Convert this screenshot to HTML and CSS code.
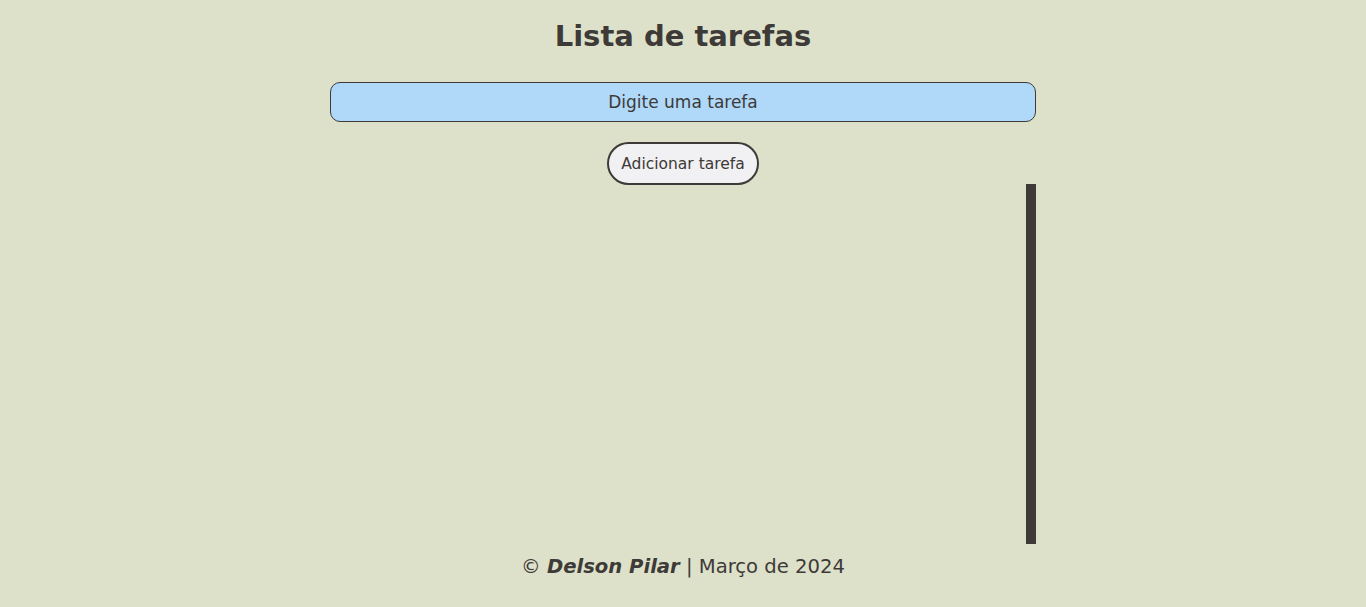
FILE: index.html
```html
<!DOCTYPE html>
<html lang="pt-BR">
<head>
<meta charset="utf-8">
<title>Lista de tarefas</title>
<link rel="stylesheet" href="styles.css">
</head>
<body>
<main class="app">
  <h1 class="title">Lista de tarefas</h1>
  <input class="task-input" type="text" placeholder="Digite uma tarefa">
  <button class="add-btn" type="button">Adicionar tarefa</button>
  <ul class="task-list"></ul>
</main>
<footer class="footer">© <strong><em>Delson Pilar</em></strong> | Março de 2024</footer>
</body>
</html>
```
FILE: styles.css
```css
* { box-sizing: border-box; }
html, body { margin: 0; padding: 0; }
body {
  background: #dde1ca;
  color: #3d3a38;
  font-family: "DejaVu Sans", "Noto Sans", sans-serif;
  height: 607px;
  overflow: hidden;
}
.app {
  width: 706px;
  margin: 0 auto;
  display: flex;
  flex-direction: column;
  align-items: center;
}
.title {
  margin: 17px 0 0;
  font-size: 29px;
  font-weight: bold;
  line-height: 38px;
  height: 38px;
}
.task-input {
  margin-top: 27px;
  width: 706px;
  height: 40px;
  border: 1px solid #3d3a38;
  border-radius: 10px;
  background: #b0d8f8;
  text-align: center;
  font-family: inherit;
  font-size: 17px;
  color: #3d3a38;
  outline: none;
}
.task-input::placeholder { color: #3d3a38; }
.add-btn {
  margin-top: 20px;
  width: 152px;
  height: 43px;
  border: 2px solid #3d3a38;
  border-radius: 22px;
  background: #f1f0f2;
  color: #3d3a38;
  font-family: inherit;
  font-size: 15.5px;
  padding: 0;
}
.task-list {
  margin: -1px 0 0;
  padding: 0;
  list-style: none;
  width: 706px;
  height: 360px;
  border-right: 10px solid #3d3a38;
}
.footer {
  text-align: center;
  font-size: 19.6px;
  line-height: 24px;
  margin-top: 11px;
}
```
